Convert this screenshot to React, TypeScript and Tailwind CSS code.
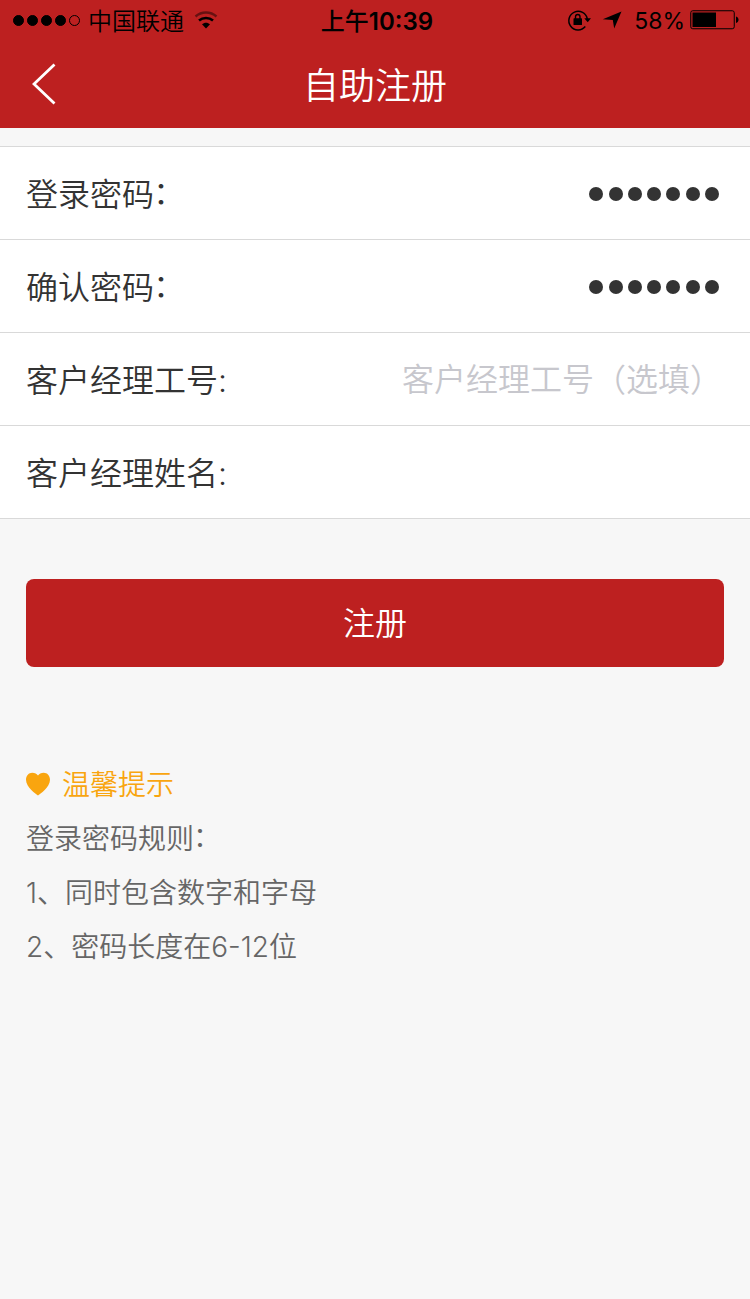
import type { ReactNode } from "react";

import { clsx } from "clsx";

interface FormRowProps {
  label: ReactNode;
  children?: ReactNode;
}

const SIGNAL_DOTS = [true, true, true, true, false];

const TIPS = ["1、同时包含数字和字母", "2、密码长度在6-12位"];

function WifiIcon() {
  return (
    <svg width="24" height="18" viewBox="0 0 24 18" fill="none">
      <path
        d="M1.5 5.5C7.5 0.2 16.5 0.2 22.5 5.5"
        stroke="#000"
        strokeOpacity="0.45"
        strokeWidth="2.4"
      />
      <path d="M5 9.6C9 6.1 15 6.1 19 9.6" stroke="#000" strokeWidth="2.6" />
      <path d="M12 17.4L8 13.2C10.3 11.1 13.7 11.1 16 13.2Z" fill="#000" />
    </svg>
  );
}

function RotationLockIcon() {
  return (
    <svg width="24" height="22" viewBox="0 0 24 22" fill="none">
      <path
        d="M18.3 17.6A9.3 9.3 0 1 1 20.3 10"
        stroke="#000"
        strokeWidth="1.5"
      />
      <path d="M17.3 9.3H24L20.7 13.3Z" fill="#000" />
      <rect x="6.5" y="9.3" width="8.5" height="6.7" rx="0.6" fill="#000" />
      <path
        d="M8.5 10V7.7A2.2 2.2 0 0 1 13 7.7V10"
        stroke="#000"
        strokeWidth="1.4"
      />
    </svg>
  );
}

function LocationIcon() {
  return (
    <svg width="20" height="18" viewBox="0 0 20 18">
      <path d="M19.5 0.5L12.2 17.5L10.8 8.9L0.8 8.2Z" fill="#000" />
    </svg>
  );
}

function BatteryIcon() {
  return (
    <svg width="49" height="20" viewBox="0 0 49 20" fill="none">
      <rect x="0.75" y="0.75" width="43.5" height="18" rx="2" stroke="#000" />
      <rect x="2.5" y="2.5" width="23.5" height="14.5" fill="#000" />
      <path d="M46 6.5C49.4 7 49.4 12.5 46 13Z" fill="#000" />
    </svg>
  );
}

function StatusBar() {
  return (
    <div className="grid h-10 grid-cols-[1fr_auto_1fr] items-center pr-[11px] pl-[13px] text-2xl text-black">
      <div className="flex items-center">
        <div className="flex gap-[3px]">
          {SIGNAL_DOTS.map((filled, index) => (
            <span
              key={index}
              className={clsx(
                "size-[11px] rounded-full border border-black",
                filled && "bg-black",
              )}
            />
          ))}
        </div>
        <span className="ml-[8px] pt-[3px] leading-[37px] font-[350]">
          中国联通
        </span>
        <span className="ml-[10px]">
          <WifiIcon />
        </span>
      </div>
      <span className="pt-[3px] pl-[2px] leading-[37px] font-medium">
        上午<span className="font-semibold">10:39</span>
      </span>
      <div className="flex items-center justify-end">
        <RotationLockIcon />
        <span className="ml-[11px]">
          <LocationIcon />
        </span>
        <span className="ml-[12px] pt-[2px] text-[23px] leading-[38px]">
          58%
        </span>
        <span className="ml-[5px]">
          <BatteryIcon />
        </span>
      </div>
    </div>
  );
}

function TitleBar() {
  return (
    <div className="grid h-[88px] grid-cols-[1fr_auto_1fr] items-center px-8 text-white">
      <button type="button" aria-label="返回">
        <svg width="24" height="42" viewBox="0 0 24 42" fill="none">
          <path d="M22.5 1.5L2 21L22.5 40.5" stroke="#fff" strokeWidth="2.8" />
        </svg>
      </button>
      <h1 className="pt-[5px] text-4xl leading-[83px] font-[350]">自助注册</h1>
    </div>
  );
}

function FormRow({ label, children }: FormRowProps) {
  return (
    <div className="flex h-[93px] items-center justify-between border-b border-[#d9d9d9] pr-7 pl-[26px] text-[32px] font-[350]">
      <div className="flex pt-[3px] leading-[89px] text-[#333]">{label}</div>
      {children}
    </div>
  );
}

// Label ending in a full-width colon, drawn centred on the text
function ColonLabel({ text }: { text: string }) {
  return (
    <>
      <span>{text}</span>
      <span className="-mt-[2px] -ml-px">：</span>
    </>
  );
}

function MaskedValue({ length }: { length: number }) {
  return (
    <div className="flex gap-[5.3px] pt-[2px] pr-[3px]">
      {Array.from({ length }, (_, index) => (
        <span key={index} className="size-[14px] rounded-full bg-[#333]" />
      ))}
    </div>
  );
}

export default function App() {
  return (
    <div className="flex min-h-screen flex-col bg-[#f7f7f7] font-['Inter','Noto_Sans_CJK_SC',sans-serif]">
      <header className="bg-[#bd2020]">
        <StatusBar />
        <TitleBar />
      </header>

      <section className="mt-[18px] border-t border-[#d9d9d9] bg-white">
        <FormRow label={<ColonLabel text="登录密码" />}>
          <MaskedValue length={7} />
        </FormRow>
        <FormRow label={<ColonLabel text="确认密码" />}>
          <MaskedValue length={7} />
        </FormRow>
        <FormRow label="客户经理工号:">
          <div className="flex pt-[2px] leading-[90px] text-[#c7c7cd]">
            客户经理工号
            <span className="-mt-[2px] w-8 text-right font-['Noto_Sans_CJK_SC'] [font-feature-settings:'halt']">
              （
            </span>
            选填
            <span className="-mt-[2px] w-8 font-['Noto_Sans_CJK_SC']">）</span>
          </div>
        </FormRow>
        <FormRow label="客户经理姓名:" />
      </section>

      <button
        type="button"
        className="mx-[26px] mt-[60px] h-[88px] rounded-lg bg-[#bd2020] pt-[2px] text-[32px] font-[350] text-white"
      >
        注册
      </button>

      <section className="mt-[91px] px-[26px] text-[28px] leading-[54px] font-[350] text-[#666]">
        <div className="flex items-center text-[#f9a50f]">
          <svg
            width="24"
            height="24"
            viewBox="0 0 24 24"
            fill="currentColor"
            className="-mt-[2px]"
          >
            <path d="M12 23.5C10.2 22.3 0 15.4 0 7.8C0 3.6 2.9 0.8 6.2 0.8C8.8 0.8 11 2.1 12 3.4C13 2.1 15.2 0.8 17.8 0.8C21.1 0.8 24 3.6 24 7.8C24 15.4 13.8 22.3 12 23.5Z" />
          </svg>
          <span className="ml-3">温馨提示</span>
        </div>
        <div className="flex h-[54px]">
          <ColonLabel text="登录密码规则" />
        </div>
        {TIPS.map((tip) => (
          <p key={tip}>{tip}</p>
        ))}
      </section>
    </div>
  );
}
